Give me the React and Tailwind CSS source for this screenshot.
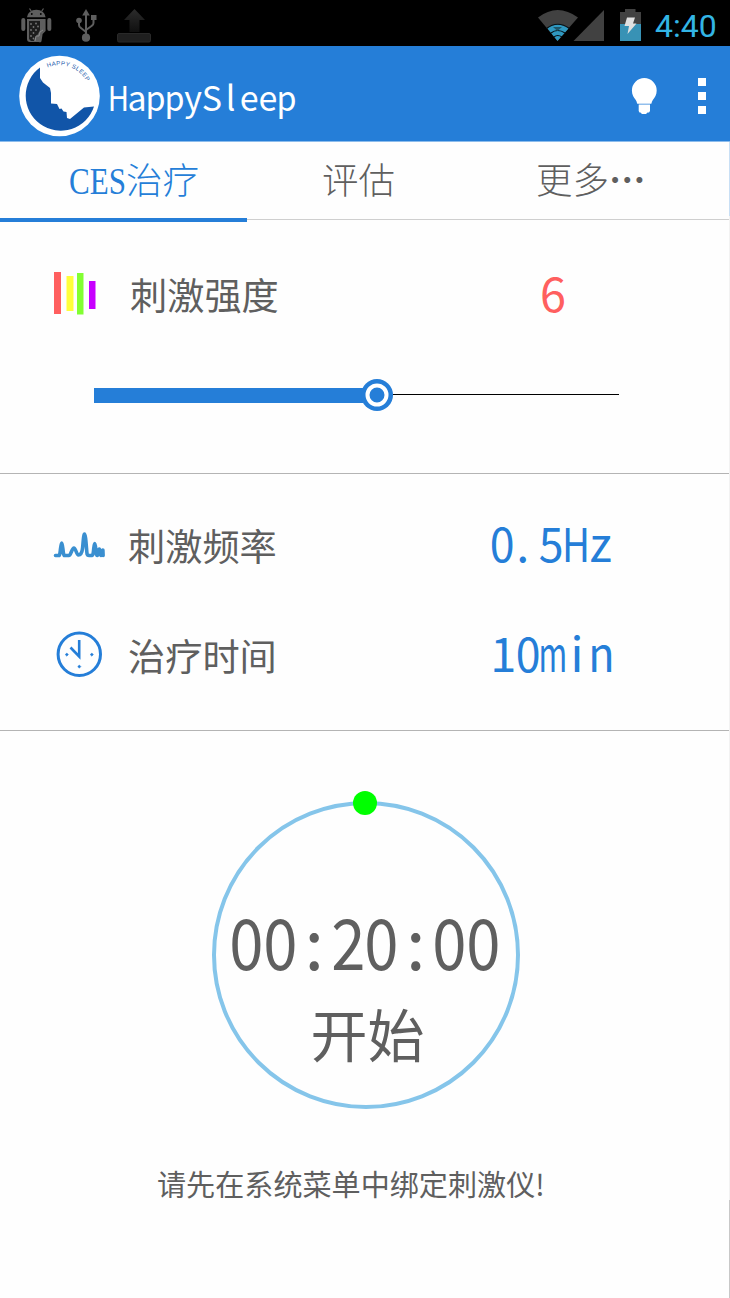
import React from "react";

const HEI = "font-['Noto_Sans_CJK_SC',sans-serif]";

// Half-width glyph squeezes for the characters that are too wide for their cell
const SQUEEZE = {
  m: "scale-x-[0.66]",
  H: "scale-x-[0.82]",
  n: "scale-x-[0.92]",
  "5": "scale-x-[0.95]",
  "0": "scale-x-[0.95]",
};

function Mono({ text, cell, shift = {}, squeeze = SQUEEZE, className = "" }) {
  return (
    <span className={`inline-flex whitespace-nowrap ${className}`}>
      {text.split("").map((c, i) => (
        <span key={i} className={`inline-flex justify-center shrink-0 ${cell} ${shift[c] || ""}`}>
          <span className={`inline-block ${squeeze[c] || ""}`}>{c}</span>
        </span>
      ))}
    </span>
  );
}

function StatusBar() {
  return (
    <div className="flex h-[46px] items-start justify-between bg-black">
      <svg width="160" height="46" viewBox="0 0 160 46">
        <g fill="#5e5e5e">
          <path d="M27 17.2a9.2 7.4 0 0 1 18.6 0z" />
          <path d="M31.5 11.5l-2-3M41.5 11.5l2-3" stroke="#5e5e5e" strokeWidth="1.2" />
          <rect x="21.3" y="18" width="4" height="13" rx="2" />
          <rect x="47.3" y="18" width="4" height="13" rx="2" />
          <path d="M27 19h18.6v12l-3 3-1 6.5c0 2-2 2-3 1.500H30c-2 0-3-1-3-3z" />
        </g>
        <path d="M29 21h11v9l-2 4-3 4-1 3h-3l-2-2z" fill="#1d1d1d" />
        <g fill="#777">
          {[[31, 24], [36, 23.500], [33.5, 27], [38, 26.500], [31, 30], [36, 30], [33.5, 33], [31, 36], [33.5, 38.500]].map(([x, y]) => (
            <circle key={`${x}-${y}`} cx={x} cy={y} r="0.9" />
          ))}
        </g>
        <path d="M35 41l1-5h3l1-4 3-2" stroke="#8a8a8a" strokeWidth="1" fill="none" />
        <circle cx="31.8" cy="14" r="0.9" fill="#000" />
        <circle cx="40.8" cy="14" r="0.9" fill="#000" />
        <g fill="none" stroke="#5e5e5e" strokeWidth="2">
          <path d="M86 14v22M79 21v4q0 2 2 3l5 4M93.500 18v5q0 2-2 3l-5.500 4" />
        </g>
        <g fill="#5e5e5e">
          <path d="M86 9l3.800 6.500h-7.600z" />
          <circle cx="79" cy="20.500" r="2.800" />
          <rect x="91" y="15" width="5.500" height="5" />
          <circle cx="86" cy="37.700" r="4.100" />
        </g>
        <defs>
          <linearGradient id="up" x1="0" x2="0" y1="0" y2="1">
            <stop offset="0" stopColor="#2c2c2c" />
            <stop offset="1" stopColor="#101010" />
          </linearGradient>
        </defs>
        <path d="M134.500 9l10.500 11h-5.500v12h-10V20H124z" fill="url(#up)" />
        <rect x="117.500" y="33.500" width="33" height="8.500" rx="1.500" fill="#1f1f1f" stroke="#292929" />
      </svg>
      <div className="flex items-start pr-3.5">
        <svg width="114" height="46" viewBox="536 0 114 46">
          <path d="M557.500 41L538 17.500Q557.500 2.500 578 17.500z" fill="#414141" />
          <path d="M547.500 28.500Q557.500 20.500 568.500 28.500L557.500 41z" fill="#2f98c0" />
          <path d="M546.500 28.500Q557.500 20 569.500 28.500M551 33Q557.500 28 565 33M554 37Q557.500 34 562 37" fill="none" stroke="#061218" strokeWidth="1.200" />
          <path d="M553 27l4.500 4 4.500-4z" fill="#1f5568" />
          <path d="M604 10v31h-30.500z" fill="#414141" />
          <path d="M620 12h5V9h10.500v3h5.500v12h-21z" fill="#414141" />
          <path d="M620 24h21v17h-21z" fill="#3892b5" />
          <path d="M627 17.500h8l-2 6h3.500L627.500 34l1.500-8h-4.500z" fill="#e0e0e0" />
        </svg>
        <span className="mt-[5px] w-[66px] whitespace-nowrap pl-[5px] font-[Roboto,sans-serif] text-[32px] leading-[42px] text-[#33b5e5]">4:40</span>
      </div>
    </div>
  );
}

function Logo() {
  return (
    <svg width="82" height="82" viewBox="19 55 82 82" className="shrink-0">
      <circle cx="59.500" cy="96" r="40.300" fill="#fff" />
      <path d="M40 67.500V78l3 4.500 7 5.500 1 5v10.500l6 .5 2.500 5 2-.5 2 3 3 .5.5 6 3 1 8.500-7 5.500-4.500 10-1A35 35 0 1 1 40 67.500z" fill="#1155a8" />
      <path id="arc" d="M47.500 67.500A31.500 31.500 0 0 1 90 90" fill="none" />
      <text fontSize="6" fontFamily="Liberation Sans, sans-serif" fill="#1155a8" letterSpacing="0.4">
        <textPath href="#arc">HAPPY SLEEP</textPath>
      </text>
    </svg>
  );
}

function Header() {
  return (
    <header className="flex h-[96px] items-center border-b border-[#8cbcec] bg-[#257ed8] pl-[19px] pr-[24px] pt-1">
      <Logo />
      <Mono
        text="HappySleep"
        cell="w-[18.7px]"
        squeeze={{ H: "scale-x-[0.86]", p: "scale-x-[0.95]", l: "scale-x-100" }}
        className={`ml-[8px] mt-[3px] text-[34px] leading-[40px] text-white ${HEI}`}
      />
      <svg width="26" height="38" viewBox="631 77 26 38" className="ml-auto">
        <g fill="#fff">
          <path d="M644.300 78a12.400 12.400 0 0 1 12.400 12.400c0 4.500-2 7-3.700 9.300-1.300 1.800-1 2.500-1.700 4h-14c-.7-1.500-.4-2.200-1.700-4-1.700-2.300-3.700-4.800-3.700-9.300A12.400 12.400 0 0 1 644.300 78z" />
          <path d="M638.700 104.600h11.300v6.400l-1 1.500h-1.500l-1.500 1.500h-4l-1.500-1.500H639.500l-.8-1.500z" />
        </g>
      </svg>
      <div className="ml-[41px] flex flex-col gap-[6px]">
        <i className="size-2 bg-white" />
        <i className="size-2 bg-white" />
        <i className="size-2 bg-white" />
      </div>
    </header>
  );
}

function Tabs() {
  return (
    <nav className={`flex h-[80px] items-start text-[36.5px] leading-[74px] font-light text-[#5f5f5f] ${HEI}`}>
      <div className="flex h-full w-[247px] flex-col border-b-4 border-[#257ed8] pl-[69px] text-[#257ed8]">
        <div className="flex whitespace-nowrap">
          <span className="inline-block w-[57px]">
            <span className="inline-block origin-left scale-x-[0.84] font-['Liberation_Serif',serif] text-[37px]">CES</span>
          </span>
          <span>治疗</span>
        </div>
      </div>
      <div className="h-[78px] w-[230px] border-b border-[#cfcfcf] pl-[75px]">评估</div>
      <div className="flex h-[78px] flex-1 whitespace-nowrap border-b border-[#cfcfcf] pl-[59px]">
        <span>更多</span>
        <span className="font-bold">…</span>
      </div>
    </nav>
  );
}

function Row({ icon, label, children, className }) {
  return (
    <div className={`flex items-center ${className}`}>
      <div className="flex w-[129px] shrink-0 pl-[53px]">{icon}</div>
      <span className={`w-[361px] text-[37.2px] leading-[40px] text-[#5f5f5f] ${HEI}`}>{label}</span>
      {children}
    </div>
  );
}

const BarsIcon = (
  <svg width="44" height="44" viewBox="53 272 44 44">
    <rect x="54" y="272" width="7" height="42" fill="#ff5f5f" />
    <rect x="66.500" y="276" width="7" height="35" fill="#ffff3c" />
    <rect x="77" y="273" width="6.500" height="41.500" fill="#82ff32" />
    <rect x="89" y="281" width="6.500" height="28" fill="#c800ff" />
  </svg>
);

const WaveIcon = (
  <svg width="52" height="28" viewBox="53 531 52 28">
    <path d="M55.500 555.500h3.500c1.500 0 1.500-12.500 2.700-12.500s1.200 12.500 2.700 12.500h4.500c2 0 3-7.500 5-7.500s2.500 7 4.500 7 3.500-1 4.200-7c.6-6 1-14 1.900-14s1.500 8 2 14c.5 7 .5 7.500 2.500 7.500h3c2 0 1.500-12 2.700-12s1 12 2.500 12 1-6.500 2.100-6.500.8 6.500 1.700 6.500.9-5.500 1.900-5.500l.2 5.500" fill="none" stroke="#3a8fd0" strokeWidth="3.600" strokeLinejoin="round" strokeLinecap="round" />
  </svg>
);

const ClockIcon = (
  <svg width="50" height="48" viewBox="53 631 50 48">
    <circle cx="79.300" cy="654.300" r="21.200" fill="none" stroke="#257ed8" strokeWidth="3" />
    <path d="M79.200 640v16.500l-8.700-9" fill="none" stroke="#257ed8" strokeWidth="2.600" />
    <path d="M66.800 653l1.600 1.600-1.600 1.600-1.600-1.600zM91.800 653l1.600 1.600-1.600 1.600-1.600-1.600zM79.300 665l1.600 1.600-1.600 1.600-1.600-1.600z" fill="#257ed8" stroke="#257ed8" strokeWidth="0.500" />
  </svg>
);

function Slider() {
  return (
    <div className="mt-[62px] flex h-8 items-center pl-[94px]">
      <div className="h-[15px] w-[269px] bg-[#257ed8]" />
      <svg width="32" height="32" viewBox="0 0 32 32" className="-ml-[2px]">
        <circle cx="16" cy="16" r="16" fill="#257ed8" />
        <circle cx="16" cy="16" r="9.500" fill="#257ed8" stroke="#fff" strokeWidth="4" />
      </svg>
      <div className="mb-px h-px w-[226px] bg-black" />
    </div>
  );
}

function Timer() {
  return (
    <div className="relative ml-[212px] mt-[70px] flex size-[308px] flex-col items-center rounded-full border-[4px] border-[#85c5ea] text-[#5f5f5f]">
      <span className="absolute -top-[14px] left-[137px] size-[24px] rounded-full bg-[#00ff00]" />
      <Mono
        text="00:20:00"
        cell="w-[33.8px]"
        squeeze={{ "0": "scale-x-[0.88]", "2": "scale-x-[0.88]" }}
        className={`mt-[99px] -ml-[2px] text-[70px] leading-[72px] ${HEI}`}
      />
      <span className={`mt-[24px] ml-[3px] text-[57px] leading-[64px] ${HEI}`}>开始</span>
    </div>
  );
}

export default function App() {
  return (
    <div className="relative h-[1298px] w-[730px] overflow-hidden bg-[#fefefe]">
      <StatusBar />
      <Header />
      <Tabs />
      <section className="h-[252px] border-b border-[#b4b4b4] pt-[49px]">
        <Row className="h-[46px]" icon={BarsIcon} label={<span className="pl-[1px]">刺激强度</span>}>
          <span className={`-mt-[5px] pl-[50px] text-[47px] leading-[44px] text-[#ff5f5f] ${HEI}`}>6</span>
        </Row>
        <Slider />
      </section>
      <section className="h-[257px] border-b border-[#b4b4b4] pt-[48px]">
        <Row className="h-[46px]" icon={WaveIcon} label={<span className="-ml-px">刺激频率</span>}>
          <Mono text="0.5Hz" cell="w-[24.6px]" shift={{ ".": "pr-[8px]" }} className={`-mt-[7px] text-[47px] leading-[44px] text-[#257ed8] ${HEI}`} />
        </Row>
        <Row className="mt-[64px] h-[46px]" icon={ClockIcon} label={<span className="-ml-px">治疗时间</span>}>
          <Mono text="10min" cell="w-[24.6px]" className={`-mt-[7px] ml-px text-[47px] leading-[44px] text-[#257ed8] ${HEI}`} />
        </Row>
      </section>
      <Timer />
      <p className={`mt-[54px] pl-[157px] text-[29.1px] leading-[40px] text-[#5f5f5f] ${HEI}`}>请先在系统菜单中绑定刺激仪!</p>
      <div className="absolute right-0 top-[142px] flex h-[1156px] w-px flex-col">
        <i className="h-[74px] bg-[#c8dff5]" />
        <i className="flex-1 bg-[#f2f2f2]" />
        <i className="h-[98px] bg-[#c8c8c8]" />
      </div>
    </div>
  );
}
